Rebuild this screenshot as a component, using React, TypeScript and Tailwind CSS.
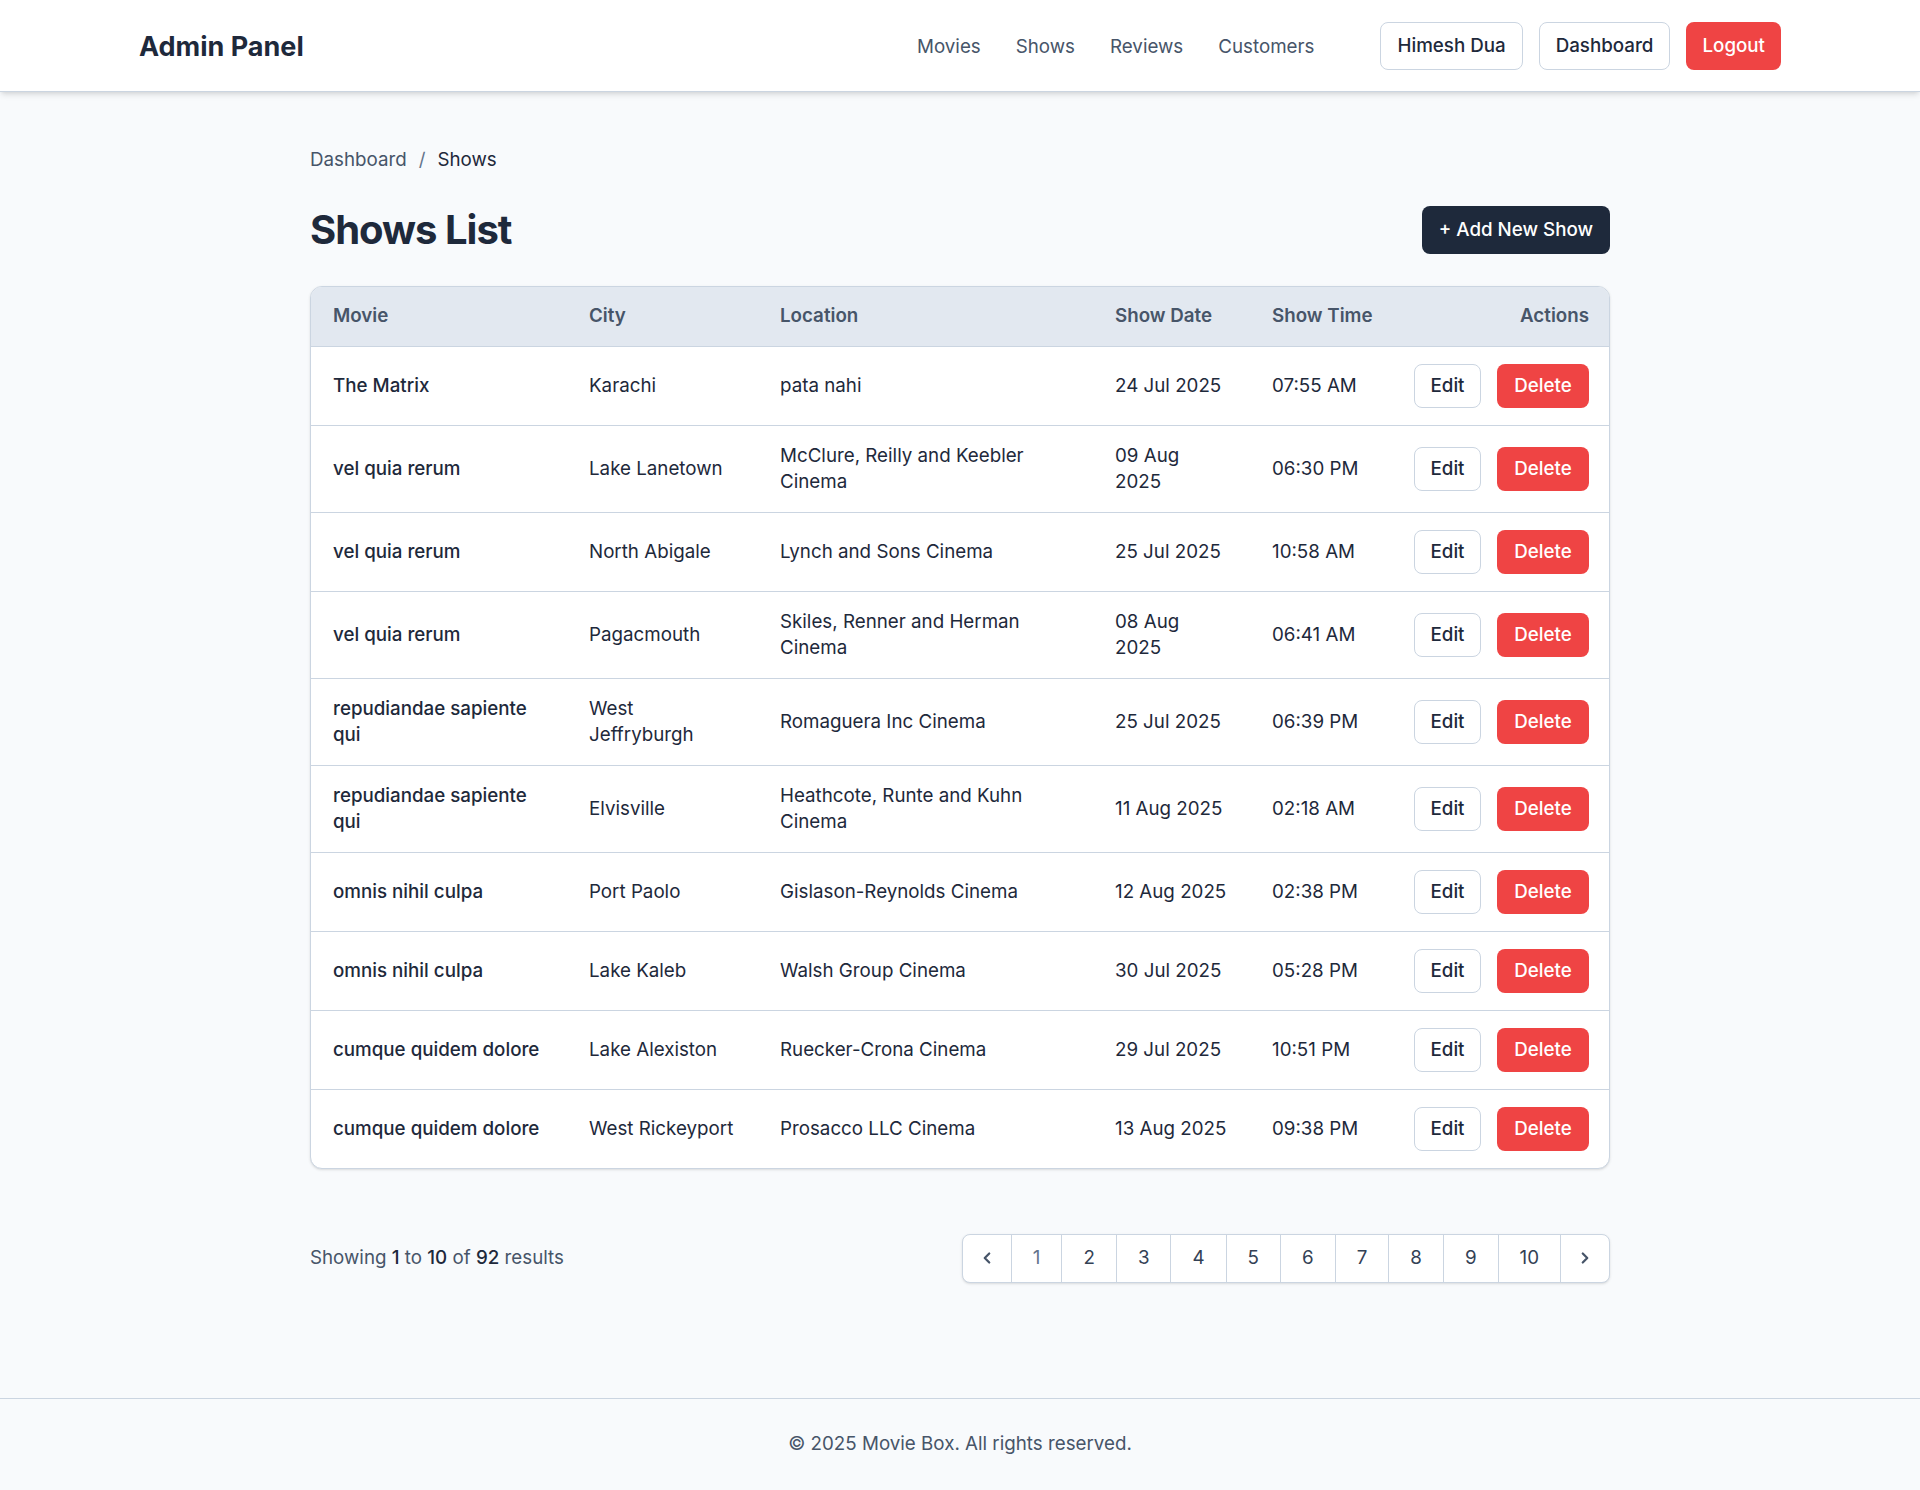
import React from 'react';

type Show = {
    id: number;
    movie: string;
    city: string;
    location: string;
    date: string;
    time: string;
};

const shows: Show[] = [
    { id: 1, movie: 'The Matrix', city: 'Karachi', location: 'pata nahi', date: '24 Jul 2025', time: '07:55 AM' },
    { id: 2, movie: 'vel quia rerum', city: 'Lake Lanetown', location: 'McClure, Reilly and Keebler Cinema', date: '09 Aug 2025', time: '06:30 PM' },
    { id: 3, movie: 'vel quia rerum', city: 'North Abigale', location: 'Lynch and Sons Cinema', date: '25 Jul 2025', time: '10:58 AM' },
    { id: 4, movie: 'vel quia rerum', city: 'Pagacmouth', location: 'Skiles, Renner and Herman Cinema', date: '08 Aug 2025', time: '06:41 AM' },
    { id: 5, movie: 'repudiandae sapiente qui', city: 'West Jeffryburgh', location: 'Romaguera Inc Cinema', date: '25 Jul 2025', time: '06:39 PM' },
    { id: 6, movie: 'repudiandae sapiente qui', city: 'Elvisville', location: 'Heathcote, Runte and Kuhn Cinema', date: '11 Aug 2025', time: '02:18 AM' },
    { id: 7, movie: 'omnis nihil culpa', city: 'Port Paolo', location: 'Gislason-Reynolds Cinema', date: '12 Aug 2025', time: '02:38 PM' },
    { id: 8, movie: 'omnis nihil culpa', city: 'Lake Kaleb', location: 'Walsh Group Cinema', date: '30 Jul 2025', time: '05:28 PM' },
    { id: 9, movie: 'cumque quidem dolore', city: 'Lake Alexiston', location: 'Ruecker-Crona Cinema', date: '29 Jul 2025', time: '10:51 PM' },
    { id: 10, movie: 'cumque quidem dolore', city: 'West Rickeyport', location: 'Prosacco LLC Cinema', date: '13 Aug 2025', time: '09:38 PM' },
];

const pages = [1, 2, 3, 4, 5, 6, 7, 8, 9, 10];

const App: React.FC = () => {
    return (
        <div className="min-h-screen flex flex-col bg-[#f8fafc] text-[#1e293b] font-['Inter','Noto_Sans',sans-serif]">
            <header className="h-[92px] bg-white border-b border-[#cbd5e1] shadow-md">
                <div className="h-full px-[139px] flex items-center">
                    <h1 className="mt-[4px] text-[27px] font-bold text-[#1e293b]">Admin Panel</h1>
                    <nav className="ml-auto pt-[3px] flex items-center gap-[35px] text-[18.75px] text-[#475569]">
                        <a href="#">Movies</a>
                        <a href="#">Shows</a>
                        <a href="#">Reviews</a>
                        <a href="#">Customers</a>
                    </nav>
                    <div className="ml-[66px] flex items-center gap-4 text-[18.75px]">
                        <button className="h-[48px] pt-[2px] px-[16px] rounded-lg border border-[#cbd5e1] bg-white text-[#1e293b] font-medium">Himesh Dua</button>
                        <button className="h-[48px] pt-[2px] px-[16px] rounded-lg border border-[#cbd5e1] bg-white text-[#1e293b] font-medium">Dashboard</button>
                        <button className="h-[48px] pt-[2px] px-[16px] rounded-lg bg-[#ef4444] text-white font-medium">Logout</button>
                    </div>
                </div>
            </header>

            <main className="flex-1 w-full max-w-[1300px] mx-auto pt-[54px] pb-[80px]">
                <div className="flex items-center gap-[12px] text-[18.75px]">
                    <a href="#" className="text-[#475569]">Dashboard</a>
                    <span className="text-[#64748b]">/</span>
                    <span className="text-[#1e293b]">Shows</span>
                </div>

                <div className="mt-[26px] mb-[26px] flex items-center justify-between">
                    <h2 className="text-[40px] font-bold tracking-tight text-[#1e293b]">Shows List</h2>
                    <button className="h-[48px] px-[17px] rounded-lg bg-[#1e293b] text-white text-[18.75px] font-medium">+ Add New Show</button>
                </div>

                <div className="bg-white rounded-xl border border-[#cbd5e1] shadow-sm overflow-hidden">
                    <table className="w-full table-fixed text-[18.75px] leading-[26px]">
                        <thead className="bg-[#e2e8f0]">
                            <tr className="h-[59px] text-left text-[#475569] whitespace-nowrap">
                                <th className="w-[256px] px-[22px] font-semibold">Movie</th>
                                <th className="w-[191px] px-[22px] font-semibold">City</th>
                                <th className="w-[335px] px-[22px] font-semibold">Location</th>
                                <th className="w-[157px] px-[22px] font-semibold">Show Date</th>
                                <th className="w-[142px] px-[22px] font-semibold">Show Time</th>
                                <th className="w-[219px] px-[22px] font-semibold text-right">Actions</th>
                            </tr>
                        </thead>
                        <tbody className="divide-y divide-[#cbd5e1] border-t border-[#cbd5e1]">
                            {shows.map((show) => (
                                <tr key={show.id} className="text-[#1e293b]">
                                    <td className="px-[22px] py-[17px] font-medium">{show.movie}</td>
                                    <td className="px-[22px] py-[17px]">{show.city}</td>
                                    <td className="px-[22px] py-[17px]">{show.location}</td>
                                    <td className="px-[22px] py-[17px]">{show.date}</td>
                                    <td className="px-[22px] py-[17px]">{show.time}</td>
                                    <td className="px-[22px] py-[17px]">
                                        <div className="flex justify-end gap-4">
                                            <button className="h-[44px] w-[67px] rounded-lg border border-[#cbd5e1] bg-white font-medium">Edit</button>
                                            <button className="h-[44px] w-[92px] rounded-lg bg-[#ef4444] text-white font-medium">Delete</button>
                                        </div>
                                    </td>
                                </tr>
                            ))}
                        </tbody>
                    </table>
                </div>

                <div className="mt-[65px] flex items-center justify-between">
                    <p className="text-[18.75px] text-[#475569]">
                        Showing <span className="font-medium text-[#1e293b]">1</span> to <span className="font-medium text-[#1e293b]">10</span> of <span className="font-medium text-[#1e293b]">92</span> results
                    </p>
                    <div className="flex h-[49px] bg-white rounded-lg border border-[#cbd5e1] shadow-sm overflow-hidden divide-x divide-[#cbd5e1] text-[18.75px]">
                        <button className="px-[15px] flex items-center justify-center text-[#475569]">
                            <svg width="18" height="18" viewBox="0 0 24 24" fill="none" stroke="currentColor" strokeWidth="3" strokeLinecap="round" strokeLinejoin="round"><path d="M15 18l-6-6 6-6" /></svg>
                        </button>
                        {pages.map((p) => (
                            <button key={p} className={`px-[21px] ${p === 1 ? 'text-[#64748b]' : 'text-[#334155]'}`}>{p}</button>
                        ))}
                        <button className="px-[15px] flex items-center justify-center text-[#475569]">
                            <svg width="18" height="18" viewBox="0 0 24 24" fill="none" stroke="currentColor" strokeWidth="3" strokeLinecap="round" strokeLinejoin="round"><path d="M9 18l6-6-6-6" /></svg>
                        </button>
                    </div>
                </div>
            </main>

            <footer className="h-[92px] border-t border-[#cbd5e1] flex items-center justify-center">
                <p className="text-[18.75px] text-[#475569]">© 2025 Movie Box. All rights reserved.</p>
            </footer>
        </div>
    );
};

export default App;
